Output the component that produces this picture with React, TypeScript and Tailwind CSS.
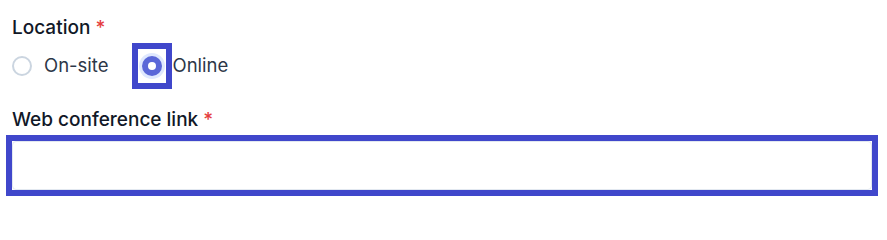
import { useState } from "react";

export default function App() {
  const [location, setLocation] = useState("online");
  const [link, setLink] = useState("");

  return (
    <div className="w-[887px] h-[206px] bg-white pl-[12px] pt-[15px] font-['Inter',sans-serif]">
      <div className="text-[19px] leading-[25px] font-medium text-[#111827]">
        Location <span className="text-[#e53e3e]">*</span>
      </div>

      <div className="mt-[9px] flex h-[34px] items-center text-[18.5px] text-[#2d3748]">
        <label className="flex items-center cursor-pointer" onClick={() => setLocation("onsite")}>
          <span className="flex h-[20px] w-[20px] items-center justify-center rounded-full border-2 border-[#cbd5e0] bg-white" />
          <span className="ml-[12px]">On-site</span>
        </label>

        <label className="ml-[29px] flex items-center cursor-pointer" onClick={() => setLocation("online")}>
          <span className="flex h-[34px] w-[28px] items-center justify-center outline-[6px] outline-solid outline-[#4047cb]">
            <span className="flex h-[20px] w-[20px] items-center justify-center rounded-full bg-[#5a67d8] shadow-[0_0_0_3px_#dfe8fe]">
              {location === "online" && <span className="h-[8px] w-[8px] rounded-full bg-white" />}
            </span>
          </span>
          <span className="ml-[7px]">Online</span>
        </label>
      </div>

      <div className="mt-[24px] text-[19px] leading-[25px] font-medium text-[#111827]">
        Web conference link <span className="text-[#e53e3e]">*</span>
      </div>

      <div className="mt-[9px] w-[860px] outline-[6px] outline-solid outline-[#4047cb]">
        <input
          type="text"
          value={link}
          onChange={(e) => setLink(e.target.value)}
          className="block h-[49px] w-full rounded-[4px] border border-[#e2e8f0] bg-white px-3 outline-none"
        />
      </div>
    </div>
  );
}
